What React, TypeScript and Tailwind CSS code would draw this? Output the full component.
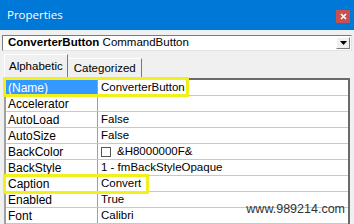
import React from 'react';

const rows: { name: string; value: string; swatch?: boolean; selected?: boolean }[] = [
  { name: '(Name)', value: 'ConverterButton', selected: true },
  { name: 'Accelerator', value: '' },
  { name: 'AutoLoad', value: 'False' },
  { name: 'AutoSize', value: 'False' },
  { name: 'BackColor', value: '&H8000000F&', swatch: true },
  { name: 'BackStyle', value: '1 - fmBackStyleOpaque' },
  { name: 'Caption', value: 'Convert' },
  { name: 'Enabled', value: 'True' },
  { name: 'Font', value: 'Calibri' },
];

const App: React.FC = () => {
  return (
    <div
      className="relative w-[354px] h-[224px] overflow-hidden bg-[#f0f0f0] text-[12px] text-black"
      style={{ fontFamily: '"Liberation Sans", Arial, sans-serif' }}
    >
      {/* title bar */}
      <div className="h-[30px] bg-[#0078d7] flex items-center justify-between pl-[7px] pr-[4px]">
        <span className="text-white text-[11.5px] leading-none" style={{ fontFamily: '"Open Sans", sans-serif' }}>
          Properties
        </span>
        <div className="w-[14px] h-[13px] bg-[#c75050] flex items-center justify-center mt-[2px]">
          <svg width="7" height="7" viewBox="0 0 7 7">
            <path d="M1 1L6 6M6 1L1 6" stroke="white" strokeWidth="1.6" />
          </svg>
        </div>
      </div>

      {/* object dropdown */}
      <div className="px-[2px] pt-[5px]">
        <div className="h-[16px] bg-white border border-[#7a7a7a] border-r-[#e3e3e3] border-b-[#e3e3e3] flex items-center">
          <div className="flex-1 pl-[5px] leading-none text-[11.5px]">
            <span className="font-bold">ConverterButton</span> CommandButton
          </div>
          <div className="w-[14px] h-[12px] mr-[1px] bg-[#f0f0f0] border border-white border-r-[#7a7a7a] border-b-[#7a7a7a] flex items-center justify-center">
            <svg width="7" height="4" viewBox="0 0 7 4">
              <path d="M0 0H7L3.5 4Z" fill="black" />
            </svg>
          </div>
        </div>
      </div>

      {/* tabs */}
      <div className="flex items-end pl-[4px] mt-[3px] h-[24px]">
        <div className="h-[24px] px-[4px] flex items-center border-l border-t border-white border-r border-r-[#7a7a7a] bg-[#f0f0f0] text-[11.5px]">
          Alphabetic
        </div>
        <div className="h-[20px] px-[5px] ml-[1px] flex items-center border-t border-white border-r border-r-[#7a7a7a] text-[11.5px]">
          Categorized
        </div>
      </div>

      {/* grid */}
      <div className="ml-[4px] mr-[4px] border-t-2 border-t-[#6a6a6a] border-r-2 border-r-[#6a6a6a] border-l-[2px] border-l-[#a0a0a0] bg-white">
        {rows.map((r) => (
          <div key={r.name} className="flex h-[16px] border-b border-[#c8c8c8] text-[12px] leading-none">
            <div
              className={
                'w-[92px] pl-[2px] flex items-center border-r border-[#a0a0a0] ' +
                (r.selected ? 'bg-[#3399ff] text-white' : 'bg-white')
              }
            >
              {r.name}
            </div>
            <div className="flex-1 pl-[3px] flex items-center gap-[6px] text-[11.5px]">
              {r.swatch && <span className="w-[10px] h-[10px] border border-[#555] bg-white" />}
              {r.value}
            </div>
          </div>
        ))}
      </div>

      {/* yellow callouts */}
      <div className="absolute left-[3px] top-[77px] w-[186px] h-[20px] border-[3px] border-[#f2f01c]" />
      <div className="absolute left-[3px] top-[174px] w-[146px] h-[20px] border-[3px] border-[#f2f01c]" />

      {/* watermark */}
      <div className="absolute right-[9px] bottom-[5px] text-[12.5px] text-[#333]">www.989214.com</div>
    </div>
  );
};

export default App;
